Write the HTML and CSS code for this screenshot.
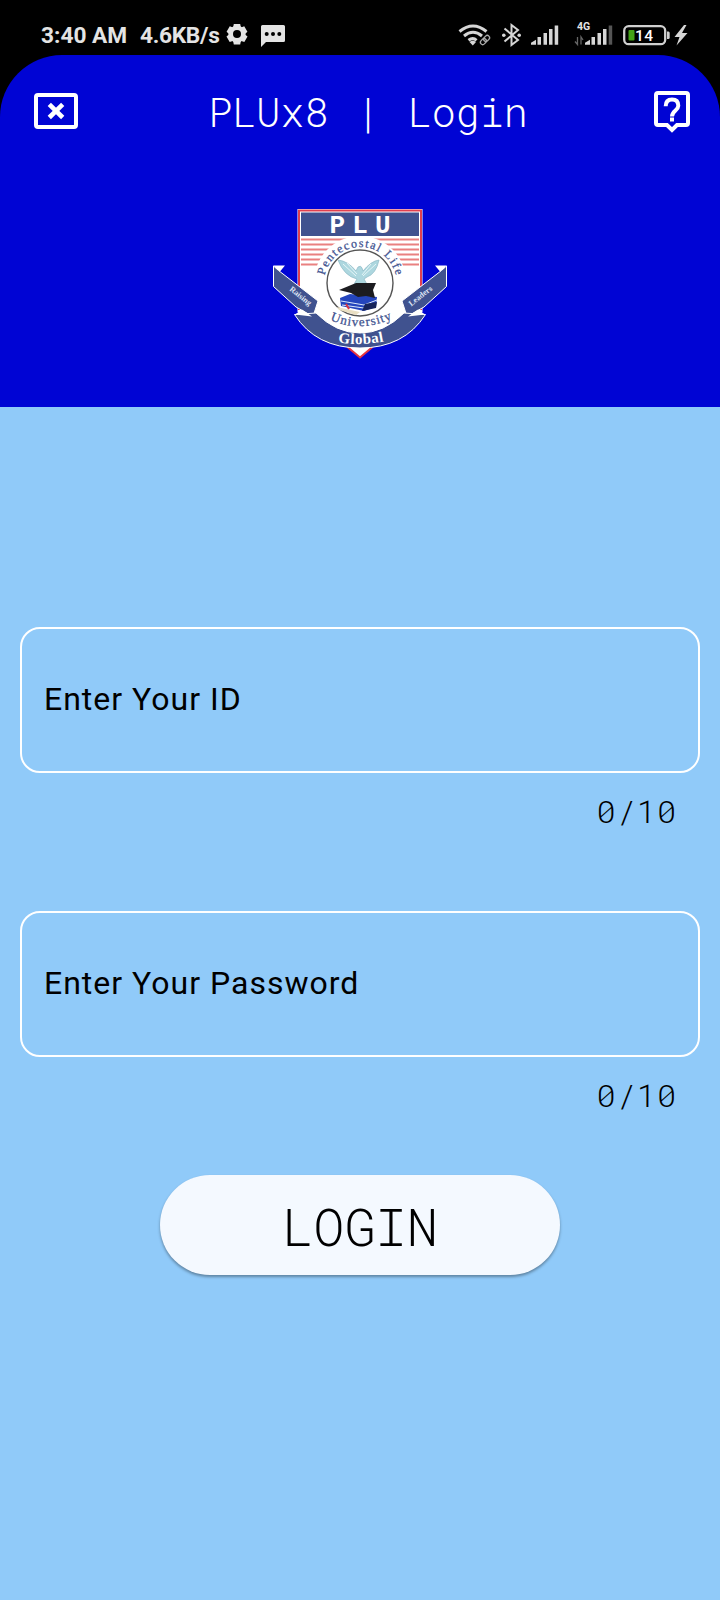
FILE: index.html
```html
<!DOCTYPE html>
<html lang="en">
<head>
<meta charset="utf-8">
<title>PLUx8 | Login</title>
<link rel="stylesheet" href="styles.css">
</head>
<body>
<div class="status">
  <span class="status-text time">3:40 AM</span>
  <span class="status-text speed">4.6KB/s</span>
  <svg class="status-left" width="62" height="28" viewBox="225 20 62 28">
    <g fill="#e4e4e4">
      <circle cx="237" cy="34" r="8.6"/>
      <path d="M233.8 24h6.4l.8 4h-8zM233.8 44.500h6.400l.8-4h-8z"/>
      <path d="M233.800 24h6.400l.8 4h-8zM233.800 44.500h6.400l.8-4h-8z" transform="rotate(60 237 34.200)"/>
      <path d="M233.800 24h6.400l.8 4h-8zM233.800 44.500h6.400l.8-4h-8z" transform="rotate(-60 237 34.200)"/>
      <path d="M262.500 25h21q1.500 0 1.500 1.500v14q0 1.500-1.500 1.500H266l-5 5V26.500q0-1.500 1.500-1.500z"/>
    </g>
    <g fill="#000"><circle cx="237" cy="34.100" r="4"/><circle cx="266.700" cy="34" r="2"/><circle cx="273" cy="34" r="2"/><circle cx="279.300" cy="34" r="2"/></g>
  </svg>
  <svg class="status-right" width="236" height="28" viewBox="456 20 236 28">
    <g fill="none" stroke="#d6d6d6" stroke-width="3">
      <path d="M459.500 31.500q13.500-11 27 0M464 36q9-7.500 18 0M468.500 40.300q4.500-3.300 8 0"/>
    </g>
    <path d="M469.500 42q3.200-2.500 6.500 0l-3.200 3.500z" fill="#d6d6d6"/>
    <g fill="none" stroke="#aaa" stroke-width="1.300" transform="rotate(-45 485 40)"><rect x="479.500" y="37.700" width="6.500" height="4.600" rx="2.300"/><rect x="484" y="37.700" width="6.500" height="4.600" rx="2.300"/></g>
    <path d="M504.500 28.500l13.500 11.500-6.500 5V25l6.500 5-13.500 11.500" fill="none" stroke="#d6d6d6" stroke-width="2"/>
    <circle cx="503.800" cy="35.300" r="1.800" fill="#d6d6d6"/><circle cx="519.200" cy="35.300" r="1.800" fill="#d6d6d6"/>
    <g fill="#d6d6d6">
      <path d="M531 44.700v-2l5-3v5zM537.500 37h3.500v7.700h-3.500zM543.500 33h3.500v11.700h-3.500zM549 29h3.500v15.700H549zM554.700 25.500h3.500v19.200h-3.500z"/>
      <path d="M585 44.700v-2l5-3v5zM591.500 37h3.500v7.700h-3.500zM597.500 33h3.500v11.700h-3.500zM603 29h3.500v15.700H603z"/>
    </g>
    <path d="M608.700 25.500h3.500v19.200h-3.500z" fill="#555"/>
    <path d="M577.500 37v7.500l-2.500-3M581 44.500V37l2 3" fill="none" stroke="#666" stroke-width="1.300"/>
    <text x="577" y="30.300" class="net">4G</text>
    <rect x="624.200" y="26.200" width="41" height="18" rx="4.500" fill="none" stroke="#d0d0d0" stroke-width="2.300"/>
    <path d="M667 31.500h1.500q1.200 0 1.200 1.500v4.500q0 1.500-1.200 1.500H667z" fill="#d0d0d0"/>
    <rect x="628.500" y="30" width="6" height="10.500" rx="1" fill="#43a317"/>
    <text x="635" y="40.700" class="batt">14</text>
    <path d="M684 25l-9.500 12h5l-3 8.500 11-12.500h-5.500l4.500-8z" fill="#d6d6d6"/>
  </svg>
</div>
<header class="header">
  <div class="bar">
    <svg class="close" width="46" height="44" viewBox="33 88 46 44" fill="none" stroke="#fff">
      <rect x="36" y="95" width="40" height="32" rx="2" stroke-width="4"/>
      <path d="M49.300 104.300l13.400 13.200M62.700 104.300L49.300 117.500" stroke-width="4.600"/>
    </svg>
    <h1 class="title">PLUx8 | Login</h1>
    <svg width="38" height="44" viewBox="653 90 38 44" fill="none" stroke="#fff">
      <path d="M658 93h28q2 0 2 2v28q0 2-2 2h-9l-5 5-5-5h-9q-2 0-2-2V95q0-2 2-2z" stroke-width="4"/>
      <path d="M665.700 106.300q0-6.800 6.300-6.800t6.300 6.300c0 4.700-6.300 4.700-6.300 10.700" stroke-width="4"/>
      <path d="M672 117.500v4" stroke-width="4"/>
    </svg>
  </div>
  <svg class="crest" width="176" height="152" viewBox="272 208 176 152">
    <path d="M297.500 209h125V312L372 347l-12 11-12-11-50.500-35z" fill="#fff"/>
    <path d="M299 310V210.500h122V310" fill="none" stroke="#e04050" stroke-width="2"/>
    <path d="M347.500 347l12.500 10.500 12.500-10.500" fill="#fff" stroke="#e5343f" stroke-width="2"/>
    <path d="M301 212.500h118V236H301z" fill="#40528f"/>
    <path d="M301 239.500h118M301 244.500h118M301 249.500h118M301 254.500h118M301 259.500h118M301 264.500h118" stroke="#e98080" stroke-width="2"/>
    <circle cx="360" cy="282" r="46" fill="#fff"/>
    <text class="plu" x="329.500" y="232.500">PLU</text>
    <path id="arc-top" d="M325 274A36.500 36.500 0 0 1 395.500 274" fill="none"/>
    <text class="name"><textPath href="#arc-top" startOffset="50%" textLength="98">Pentecostal Life</textPath></text>
    <circle cx="360" cy="283" r="33" fill="#fff" stroke="#555" stroke-width="1.400"/>
    <path d="M338 260q10 1 18 11l2-4q3-2 4 1l1 3q8-10 16-11-3 14-12 17l-3 2 4 7h-15l4-7q-13-3-19-19z" fill="#add7df" stroke="#8cb9c5" stroke-width=".7"/>
    <path d="M343 264l13 12M347 263l10 11M376 264l-13 12M371 264l-9 11" stroke="#e5f5f7"/>
    <path d="M340 298l10-4 27 3-1 10-12 4-23-5z" fill="#2445bd"/>
    <path d="M341 301l23 4 13-5M342 305l22 3" stroke="#dbe8fa" fill="none"/>
    <path d="M365 304l12-2-1 6-14 3z" fill="#172459"/>
    <path d="M337 307l23 5-4 3-17-5z" fill="#e9dfc3"/><path d="M346 304l3 5" stroke="#d83445" stroke-width="2"/>
    <path d="M339 290l17-7 20 0-3 7 2 8-9-2-8 1-7-4z" fill="#1c1c20"/>
    <g fill="#40528f" stroke="#fff" stroke-width="1">
      <path d="M273.500 266l5 4.500L318 301l-5 15.500L296 307l-22.500-20.500z"/>
      <path d="M446.500 266l-5 4.500L402 301l5 15.500L424 307l22.500-20.500z"/>
      <path d="M294.500 314.500L316 313q20 20 44 20t44-20l21.500 1.500Q404 348 360 348 316 348 294.500 314.500z"/>
    </g>
    <path d="M273.500 265.500l11.500 0-5 6-4-3zM446.500 265.500l-11.500 0 5 6 4-3zM295 314.500l7-5 10 7zM425 314.500l-7-5-10 7z" fill="#fff"/>
    <path id="arc-uni" d="M326 318Q360 335 396 317" fill="none"/>
    <text class="name uni"><textPath href="#arc-uni" startOffset="50%" textLength="64">University</textPath></text>
    <path id="arc-glob" d="M334 341.500Q360 347 388 340.500" fill="none"/>
    <text class="global"><textPath href="#arc-glob" startOffset="50%" textLength="46">Global</textPath></text>
    <text class="ribbon" transform="translate(299 298) rotate(39)">Raising</text>
    <text class="ribbon" transform="translate(422 298) rotate(-38)">Leaders</text>
  </svg>
</header>
<main class="form">
  <div class="field">Enter Your ID</div>
  <div class="counter">0/10</div>
  <div class="field second">Enter Your Password</div>
  <div class="counter">0/10</div>
  <button class="login"><span class="login-label">LOGIN</span></button>
</main>
</body>
</html>
```
FILE: styles.css
```css
* { box-sizing: border-box; }
body {
  margin: 0;
  width: 720px;
  height: 1600px;
  background: linear-gradient(#000 120px, #90caf9 120px);
  font-family: Roboto, sans-serif;
  overflow: hidden;
}
.status { height: 55px; display: flex; align-items: flex-start; padding-left: 41px; color: #e4e4e4; }
.status-text { font-size: 22.7px; line-height: 28px; font-weight: 700; margin-top: 22px; white-space: nowrap; }
.time { width: 99px; }
.speed { width: 85px; letter-spacing: -.3px; }
.status-left { margin-top: 20px; }
.status-right { margin: 20px 28px 0 auto; }
.net { font: 700 10.5px Roboto, sans-serif; fill: #e4e4e4; }
.batt { font: 500 15.5px Roboto, sans-serif; fill: #fff; letter-spacing: .4px; }
.header {
  height: 352px;
  background: #0004d4;
  border-radius: 62px 62px 0 0;
  display: flex;
  flex-direction: column;
  align-items: center;
}
.bar { width: 100%; height: 114px; padding: 0 29px 0 33px; display: flex; align-items: center; justify-content: space-between; }
.close { margin-bottom: 4px; }
.title {
  margin: 0 0 0 4px;
  font: 300 40px/48px "Roboto Mono", "Liberation Mono", monospace;
  word-spacing: 3.7px;
  color: #fff;
}
.crest { margin-top: 39px; }
.plu { font: 700 26px "Liberation Mono", monospace; fill: #fff; letter-spacing: 7.2px; }
.name { font: 12px "Liberation Serif", serif; fill: #40528f; stroke: #40528f; stroke-width: .25; text-anchor: middle; }
.uni { font-size: 13px; }
.global { font: 700 15px "Liberation Serif", serif; fill: #fff; text-anchor: middle; }
.ribbon { font: 700 8px "Liberation Serif", serif; fill: #dfe5f5; text-anchor: middle; }
.form { height: 1193px; padding: 220px 20px 0; background: #90caf9; display: flex; flex-direction: column; }
.field {
  height: 146px;
  border: 2px solid #fff;
  border-radius: 20px;
  padding-left: 22px;
  font-size: 32px;
  line-height: 140px;
  letter-spacing: 1px;
  color: #000;
}
.second { margin-top: 80px; }
.counter {
  height: 58px;
  padding: 19px 23px 0 0;
  text-align: right;
  font: 300 32px/38px "Roboto Mono", "Liberation Mono", monospace;
  letter-spacing: .9px;
}
.login {
  width: 400px;
  height: 100px;
  margin: 60px auto 0;
  border: 0;
  border-radius: 50px;
  background: #f4f9ff;
  box-shadow: 0 2px 3px rgba(0, 0, 0, .35);
  display: flex;
  align-items: center;
  justify-content: center;
}
.login-label {
  margin-top: 2px;
  font: 300 52px/60px "Roboto Mono", "Liberation Mono", monospace;
  color: #000;
}
```
